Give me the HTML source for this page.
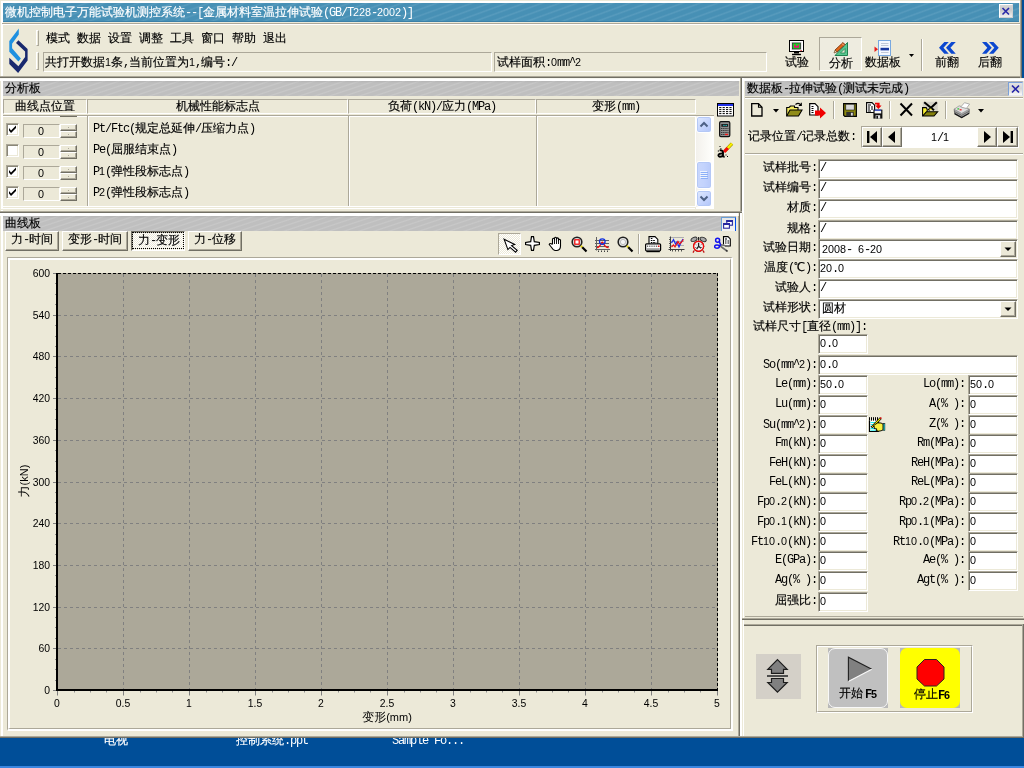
<!DOCTYPE html>
<html lang="zh"><head><meta charset="utf-8"><title>微机控制电子万能试验机测控系统</title><style>
html,body{margin:0;padding:0}
body{width:1024px;height:768px;overflow:hidden;background:#004e98;position:relative;font-family:"Liberation Mono","WenQuanYi Zen Hei",sans-serif;font-size:12px;line-height:12px;color:#000}
div,svg{position:absolute;box-sizing:border-box}
.t{white-space:nowrap;height:12px;-webkit-text-stroke:0.16px currentColor}
.l,.d{-webkit-text-stroke:0}
body>div,body>svg{will-change:transform}
.t span{position:static}
.l{font-family:"Liberation Mono",monospace;font-size:12px;letter-spacing:-1.2px}
.d{font-family:"Liberation Sans",sans-serif;font-size:10.8px}
.ax{font-family:"Liberation Sans",sans-serif;font-size:10.4px;fill:#000}
.axt{font-size:11px}
.axc{font-family:"Liberation Sans","WenQuanYi Zen Hei",sans-serif;font-size:12px}
.a{font-family:"Liberation Sans",sans-serif;font-size:11px;white-space:nowrap;height:12px;line-height:12px}
.stripe{background:linear-gradient(rgba(0,0,0,.06),rgba(0,0,0,0) 2px),repeating-linear-gradient(161.6deg,#bfbfbf 0,#bfbfbf 2.4px,#c8c8c8 3.6px,#bfbfbf 4.74px)}
.sunk{border:1px solid;border-color:#aca899 #fff #fff #aca899;}
.field{background:#fff;border:1px solid;border-color:#716f64 #fff #fff #716f64;box-shadow:inset 1px 1px 0 #aca899}
.btn{background:#ece9d8;border:1px solid;border-color:#fff #716f64 #716f64 #fff;box-shadow:inset -1px -1px 0 #aca899}
</style></head><body>
<div style="left:0px;top:0px;width:1022px;height:738px;background:#ece9d8"></div>
<div style="left:1px;top:1px;width:1019px;height:2px;background:#fff"></div>
<div style="left:1px;top:1px;width:2px;height:735px;background:#fff"></div>
<div style="left:1020px;top:0px;width:1px;height:738px;background:#aca899"></div>
<div style="left:1021px;top:0px;width:1px;height:738px;background:#716f64"></div>
<div style="left:0px;top:766px;width:1024px;height:2px;background:#3a86e0"></div>
<div class="t" style="left:104px;top:735px;color:#fff;clip-path:inset(3px 0 0 0)">电视</div>
<div class="t" style="left:236px;top:735px;color:#fff;clip-path:inset(3px 0 0 0)">控制系统<span class="l">.ppt</span></div>
<div class="t" style="left:392px;top:735px;color:#fff;clip-path:inset(3px 0 0 0)"><span class="l">Sample&nbsp;Fo...</span></div>
<div style="left:3px;top:3px;width:1016px;height:19px;background:repeating-linear-gradient(160deg,#4790b5 0,#4790b5 3px,#589bbd 4.5px,#4790b5 6px)"></div>
<div style="left:3px;top:21px;width:1016px;height:1px;background:#3b80a8"></div>
<div class="t" style="left:5px;top:6px;color:#fff">微机控制电子万能试验机测控系统<span class="l">--[</span>金属材料室温拉伸试验<span class="l">(GB/T</span><span class="d">228</span><span class="l">-</span><span class="d">2002</span><span class="l">)]</span></div>
<div style="left:999px;top:4px;width:14px;height:14px;background:linear-gradient(#d8d8d8,#c8c8c8 40%,#f0f0f0);border:1px solid;border-color:#fff #d0d0d0 #d0d0d0 #fff"></div>
<svg style="left:999px;top:4px" width="14" height="14" viewBox="0 0 14 14"><path d="M3.5 4 L10 10.5 M10 4 L3.5 10.5" stroke="#2828a8" stroke-width="1.6" fill="none"/></svg>
<div style="left:2px;top:23px;width:1018px;height:1px;background:#aca899"></div>
<div style="left:2px;top:24px;width:1018px;height:1px;background:#ffffff"></div>
<svg style="left:4px;top:24px" width="40" height="54" viewBox="0 0 40 54"><polygon points="14.8,4.6 5.3,16.9 5.3,27.8 14.4,37.6 16.9,34.5 8.1,24.3 8.1,19.7 14.8,10.5" fill="#1e90e0"/><polygon points="14.4,16.2 23.6,25 23.6,36.6 14.1,48.9 5.3,40.1 5.3,33.8 14.4,42.2 21.1,33 21.1,27.4 12,19" fill="#18286e"/></svg>
<div style="left:36px;top:30px;width:3px;height:16px;border:1px solid;border-color:#fff #aca899 #aca899 #fff;background:#ece9d8"></div>
<div style="left:36px;top:52px;width:3px;height:18px;border:1px solid;border-color:#fff #aca899 #aca899 #fff;background:#ece9d8"></div>
<div class="t" style="left:46px;top:33px;">模式</div>
<div class="t" style="left:77px;top:33px;">数据</div>
<div class="t" style="left:108px;top:33px;">设置</div>
<div class="t" style="left:139px;top:33px;">调整</div>
<div class="t" style="left:170px;top:33px;">工具</div>
<div class="t" style="left:201px;top:33px;">窗口</div>
<div class="t" style="left:232px;top:33px;">帮助</div>
<div class="t" style="left:263px;top:33px;">退出</div>
<div class="sunk" style="left:43px;top:52px;width:449px;height:20px;"></div>
<div class="t" style="left:45px;top:56px;">共打开数据<span class="d">1</span>条<span class="l">,</span>当前位置为<span class="d">1</span><span class="l">,</span>编号<span class="l">:/</span></div>
<div class="sunk" style="left:494px;top:52px;width:273px;height:20px;"></div>
<div class="t" style="left:497px;top:56px;">试样面积<span class="l">:</span><span class="d">0</span><span class="l">mm^</span><span class="d">2</span></div>
<div class="t" style="left:785px;top:57px;">试验</div>
<svg style="left:789px;top:40px" width="15" height="16" viewBox="0 0 15 16"><rect x="0.5" y="0.5" width="14" height="11" fill="#e8e8e8" stroke="#000"/><rect x="1.5" y="1.5" width="12" height="9" fill="none" stroke="#fff"/><rect x="3.5" y="3" width="8" height="6" fill="#10e020" stroke="#303030" stroke-width="0.8"/><path d="M5 4.5h1.6v1.5h2v-1.5h1.6v3.3h-5.2z" fill="#e81070"/><rect x="11.5" y="10" width="1.2" height="1.2" fill="#e02020"/><rect x="5" y="12" width="5" height="1.5" fill="#000"/><path d="M3 14.5h9" stroke="#000" stroke-width="1.4"/></svg>
<div style="left:819px;top:37px;width:43px;height:34px;border:1px solid;border-color:#aca899 #fff #fff #aca899;background:#eeece0"></div>
<div class="t" style="left:829px;top:58px;">分析</div>
<svg style="left:833px;top:41px" width="16" height="16" viewBox="0 0 16 16"><polygon points="14.5,1.5 14.5,14.5 2,14.5" fill="#58c890" stroke="#208050"/><polygon points="12,7.5 12,12 7.5,12" fill="#ece9d8" stroke="#208050" stroke-width="0.8"/><path d="M2 9 L10 1.5 L12 3.5 L4 11 Z" fill="#e06818" stroke="#702808" stroke-width="0.8"/><path d="M2 9 L1 12 L4 11Z" fill="#f0d0a0" stroke="#604020" stroke-width="0.6"/><path d="M9 2.5 L11 4.5" stroke="#f8b0a0" stroke-width="1"/></svg>
<div class="t" style="left:865px;top:57px;">数据板</div>
<svg style="left:874px;top:39px" width="18" height="18" viewBox="0 0 18 18"><rect x="4.5" y="1.5" width="12" height="15" fill="#f4f8ff" stroke="#78a8e0"/><path d="M7 4.5H14.5M7 6.5H14.5M7 13.5H14.5" stroke="#c0c8d8"/><rect x="6.5" y="8.8" width="8.5" height="2.6" fill="#1838a0"/><polygon points="0.5,7.5 0.5,13 4,10.2" fill="#e81818"/></svg>
<svg style="left:909px;top:54px" width="5" height="3" viewBox="0 0 5 3"><polygon points="0,0 5,0 2.5,3" fill="#000"/></svg>
<div style="left:921px;top:39px;width:1px;height:32px;background:#aca899"></div>
<div style="left:922px;top:39px;width:1px;height:32px;background:#ffffff"></div>
<div class="t" style="left:935px;top:57px;">前翻</div>
<div class="t" style="left:978px;top:57px;">后翻</div>
<svg style="left:938.6px;top:42px" width="18" height="12" viewBox="0 0 18 12"><polygon points="9.75,0.00 5.35,0.00 0.00,5.85 5.35,11.70 9.75,11.70 4.45,5.85" fill="#0c48d0"/><polygon points="16.75,0.00 12.35,0.00 7.00,5.85 12.35,11.70 16.75,11.70 11.45,5.85" fill="#0c48d0"/></svg>
<svg style="left:982px;top:42px" width="18" height="12" viewBox="0 0 18 12"><polygon points="0.00,0.00 4.40,0.00 9.75,5.85 4.40,11.70 0.00,11.70 5.30,5.85" fill="#0c48d0"/><polygon points="7.00,0.00 11.40,0.00 16.75,5.85 11.40,11.70 7.00,11.70 12.30,5.85" fill="#0c48d0"/></svg>
<div style="left:0px;top:76px;width:1020px;height:1px;background:#aca899"></div>
<div style="left:0px;top:77px;width:1020px;height:1px;background:#716f64"></div>
<div style="left:0px;top:78px;width:1020px;height:1px;background:#f8f7f0"></div>
<div style="left:0px;top:79px;width:1020px;height:1px;background:#ffffff"></div>
<div style="left:0px;top:80px;width:1020px;height:1px;background:#ffffff"></div>
<div class="stripe" style="left:3px;top:81px;width:736px;height:15px;"></div>
<div class="t" style="left:5px;top:83px;">分析板</div>
<div style="left:3px;top:99px;width:84px;height:15px;border:1px solid;border-color:#aca899 #fff #fff #aca899"></div>
<div class="t" style="left:-55px;top:101px;width:200px;text-align:center;">曲线点位置</div>
<div style="left:87px;top:99px;width:261px;height:15px;border:1px solid;border-color:#aca899 #fff #fff #aca899"></div>
<div class="t" style="left:117.5px;top:101px;width:200px;text-align:center;">机械性能标志点</div>
<div style="left:348px;top:99px;width:188px;height:15px;border:1px solid;border-color:#aca899 #fff #fff #aca899"></div>
<div class="t" style="left:342px;top:101px;width:200px;text-align:center;">负荷<span class="l">(kN)/</span>应力<span class="l">(MPa)</span></div>
<div style="left:536px;top:99px;width:160px;height:15px;border:1px solid;border-color:#aca899 #fff #fff #aca899"></div>
<div class="t" style="left:516px;top:101px;width:200px;text-align:center;">变形<span class="l">(mm)</span></div>
<div style="left:3px;top:115px;width:711px;height:1px;background:#aca899"></div>
<div style="left:3px;top:116px;width:693px;height:1px;background:#ffffff"></div>
<div style="left:87px;top:115px;width:1px;height:91px;background:#aca899"></div>
<div style="left:88px;top:117px;width:1px;height:89px;background:#ffffff"></div>
<div style="left:348px;top:115px;width:1px;height:91px;background:#aca899"></div>
<div style="left:349px;top:117px;width:1px;height:89px;background:#ffffff"></div>
<div style="left:536px;top:115px;width:1px;height:91px;background:#aca899"></div>
<div style="left:537px;top:117px;width:1px;height:89px;background:#ffffff"></div>
<div style="left:3px;top:206px;width:692px;height:1px;background:#ffffff"></div>
<div style="left:3px;top:208px;width:692px;height:1px;background:#ffffff"></div>
<div style="left:6px;top:123px;width:13px;height:13px;background:#fff;border:1px solid;border-color:#aca899 #fff #fff #aca899;box-shadow:inset 1px 1px 0 #8a8778, inset -1px -1px 0 #ece9d8"></div>
<svg style="left:6px;top:123px" width="13" height="13" viewBox="0 0 13 13"><path d="M3 5 L5 7.5 L10 2.5 L10 5 L5 10 L3 7.5Z" fill="#000"/></svg>
<div style="left:23px;top:124px;width:37px;height:14px;border:1px solid;border-color:#aca899 #fff #fff #aca899"></div>
<div class="t" style="left:-59px;top:125px;width:200px;text-align:center;"><span class="d">0</span></div>
<div class="btn" style="left:60px;top:124px;width:17px;height:7px;"></div>
<div class="btn" style="left:60px;top:131px;width:17px;height:7px;"></div>
<div style="left:68px;top:127px;width:1px;height:1px;background:#aca899"></div>
<div style="left:68px;top:134px;width:1px;height:1px;background:#aca899"></div>
<div class="t" style="left:93px;top:123px;"><span class="l">Pt/Ftc(</span>规定总延伸<span class="l">/</span>压缩力点<span class="l">)</span></div>
<div style="left:6px;top:144px;width:13px;height:13px;background:#fff;border:1px solid;border-color:#aca899 #fff #fff #aca899;box-shadow:inset 1px 1px 0 #8a8778, inset -1px -1px 0 #ece9d8"></div>
<div style="left:23px;top:145px;width:37px;height:14px;border:1px solid;border-color:#aca899 #fff #fff #aca899"></div>
<div class="t" style="left:-59px;top:146px;width:200px;text-align:center;"><span class="d">0</span></div>
<div class="btn" style="left:60px;top:145px;width:17px;height:7px;"></div>
<div class="btn" style="left:60px;top:152px;width:17px;height:7px;"></div>
<div style="left:68px;top:148px;width:1px;height:1px;background:#aca899"></div>
<div style="left:68px;top:155px;width:1px;height:1px;background:#aca899"></div>
<div class="t" style="left:93px;top:144px;"><span class="l">Pe(</span>屈服结束点<span class="l">)</span></div>
<div style="left:6px;top:165px;width:13px;height:13px;background:#fff;border:1px solid;border-color:#aca899 #fff #fff #aca899;box-shadow:inset 1px 1px 0 #8a8778, inset -1px -1px 0 #ece9d8"></div>
<svg style="left:6px;top:165px" width="13" height="13" viewBox="0 0 13 13"><path d="M3 5 L5 7.5 L10 2.5 L10 5 L5 10 L3 7.5Z" fill="#000"/></svg>
<div style="left:23px;top:166px;width:37px;height:14px;border:1px solid;border-color:#aca899 #fff #fff #aca899"></div>
<div class="t" style="left:-59px;top:167px;width:200px;text-align:center;"><span class="d">0</span></div>
<div class="btn" style="left:60px;top:166px;width:17px;height:7px;"></div>
<div class="btn" style="left:60px;top:173px;width:17px;height:7px;"></div>
<div style="left:68px;top:169px;width:1px;height:1px;background:#aca899"></div>
<div style="left:68px;top:176px;width:1px;height:1px;background:#aca899"></div>
<div class="t" style="left:93px;top:165px;"><span class="l">P</span><span class="d">1</span><span class="l">(</span>弹性段标志点<span class="l">)</span></div>
<div style="left:6px;top:186px;width:13px;height:13px;background:#fff;border:1px solid;border-color:#aca899 #fff #fff #aca899;box-shadow:inset 1px 1px 0 #8a8778, inset -1px -1px 0 #ece9d8"></div>
<svg style="left:6px;top:186px" width="13" height="13" viewBox="0 0 13 13"><path d="M3 5 L5 7.5 L10 2.5 L10 5 L5 10 L3 7.5Z" fill="#000"/></svg>
<div style="left:23px;top:187px;width:37px;height:14px;border:1px solid;border-color:#aca899 #fff #fff #aca899"></div>
<div class="t" style="left:-59px;top:188px;width:200px;text-align:center;"><span class="d">0</span></div>
<div class="btn" style="left:60px;top:187px;width:17px;height:7px;"></div>
<div class="btn" style="left:60px;top:194px;width:17px;height:7px;"></div>
<div style="left:68px;top:190px;width:1px;height:1px;background:#aca899"></div>
<div style="left:68px;top:197px;width:1px;height:1px;background:#aca899"></div>
<div class="t" style="left:93px;top:186px;"><span class="l">P</span><span class="d">2</span><span class="l">(</span>弹性段标志点<span class="l">)</span></div>
<div style="left:60px;top:116px;width:17px;height:1px;background:#716f64"></div>
<div style="left:696px;top:116px;width:18px;height:93px;background:#fff"></div>
<div style="left:696px;top:116px;width:16px;height:91px;background:linear-gradient(90deg,#f3f1ec,#fefefb)"></div>
<div style="left:695px;top:117px;width:1px;height:90px;background:#ffffff"></div>
<div style="left:696px;top:116px;width:16px;height:17px;background:linear-gradient(135deg,#e1eafe,#c3d3fd 60%,#b0c4f8);border:1px solid #fff;border-radius:3px;box-shadow:inset 0 0 0 1px #b4c8f6"></div>
<svg style="left:696px;top:116px" width="16" height="17" viewBox="0 0 16 17"><path d="M4.5 10.5 L8 7 L11.5 10.5" stroke="#4d6185" stroke-width="2" fill="none"/></svg>
<div style="left:696px;top:190px;width:16px;height:17px;background:linear-gradient(135deg,#e1eafe,#c3d3fd 60%,#b0c4f8);border:1px solid #fff;border-radius:3px;box-shadow:inset 0 0 0 1px #b4c8f6"></div>
<svg style="left:696px;top:190px" width="16" height="17" viewBox="0 0 16 17"><path d="M4.5 6.5 L8 10 L11.5 6.5" stroke="#4d6185" stroke-width="2" fill="none"/></svg>
<div style="left:696px;top:161px;width:16px;height:28px;background:linear-gradient(90deg,#c9d7fc,#c3d3fd 50%,#b8cafa);border:1px solid #fff;border-radius:3px;box-shadow:inset 0 0 0 1px #b4c8f6"></div>
<div style="left:700px;top:171px;width:7px;height:1px;background:#eef4fe"></div>
<div style="left:701px;top:172px;width:7px;height:1px;background:#8cb0f8"></div>
<div style="left:700px;top:173px;width:7px;height:1px;background:#eef4fe"></div>
<div style="left:701px;top:174px;width:7px;height:1px;background:#8cb0f8"></div>
<div style="left:700px;top:175px;width:7px;height:1px;background:#eef4fe"></div>
<div style="left:701px;top:176px;width:7px;height:1px;background:#8cb0f8"></div>
<div style="left:700px;top:177px;width:7px;height:1px;background:#eef4fe"></div>
<div style="left:701px;top:178px;width:7px;height:1px;background:#8cb0f8"></div>
<svg style="left:717px;top:102px" width="17" height="15" viewBox="0 0 17 15"><rect x="0.5" y="1.5" width="16" height="12.5" fill="#fff" stroke="#000"/><rect x="1" y="2" width="15" height="2" fill="#2030e8"/><path d="M2.2 5.6H15M2.2 7.6H15M2.2 9.6H15M2.2 11.6H15" stroke="#000" stroke-width="1" stroke-dasharray="2.2 1.2"/></svg>
<svg style="left:719px;top:121px" width="12" height="17" viewBox="0 0 12 17"><rect x="0.6" y="0.6" width="10.2" height="15" rx="1.3" fill="#909090" stroke="#101010" stroke-width="1.2"/><rect x="2.3" y="3" width="6.8" height="2.8" fill="#202020"/><rect x="4.4" y="3.9" width="1.1" height="1.1" fill="#20e0e8"/><rect x="6.6" y="3.9" width="1.1" height="1.1" fill="#20e0e8"/><path d="M2.3 7.5H9.3M2.3 9.5H9.3M2.3 11.5H9.3M2.3 13.5H5.5" stroke="#101010" stroke-width="1" stroke-dasharray="1 1.1"/><rect x="6" y="12.8" width="3.1" height="1.3" fill="#f01818"/></svg>
<svg style="left:716px;top:141px" width="18" height="18" viewBox="0 0 18 18"><path d="M8.6 10.4 L16 2.6" stroke="#a09000" stroke-width="3.4"/><path d="M8.6 10.4 L16 2.6" stroke="#f8f000" stroke-width="2.2"/><path d="M8 11 L11.8 7" stroke="#f00810" stroke-width="3.2"/><path d="M3.6 9.4 q3 -0.6 3.4 1.8 v3.6 q0.4 1.2 1.6 0.6 M7 12.6 q-4.6 -0.4 -4.6 2 q0.4 2 4.6 0.4" fill="none" stroke="#000" stroke-width="1.9"/><path d="M3.5 5.5h1M4.4 7.6h1M1.8 10h1.2M4.8 9.6h1M9.5 14h1M11 15.5h1" stroke="#000" stroke-width="1"/></svg>
<div style="left:0px;top:209px;width:738px;height:1px;background:#ece9d8"></div>
<div style="left:0px;top:211px;width:738px;height:1px;background:#aca899"></div>
<div style="left:0px;top:212px;width:738px;height:1px;background:#716f64"></div>
<div style="left:0px;top:213px;width:738px;height:1px;background:#ffffff"></div>
<div style="left:0px;top:214px;width:738px;height:1px;background:#ffffff"></div>
<div style="left:0px;top:215px;width:738px;height:1px;background:#ffffff"></div>
<div class="stripe" style="left:3px;top:216px;width:733px;height:15px;"></div>
<div class="t" style="left:5px;top:218px;">曲线板</div>
<div style="left:721px;top:217px;width:15px;height:14px;background:linear-gradient(#e6e6e6,#f4f4f4);border-style:solid;border-width:1px 1px 0 1px;border-color:#6a9fd8 #0050ee #fff #6a9fd8"></div>
<svg style="left:721px;top:217px" width="15" height="14" viewBox="0 0 15 14"><rect x="5.8" y="3.6" width="5.6" height="4.6" fill="#fff" stroke="#2828a0" stroke-width="1.1"/><rect x="2.6" y="6.6" width="5.8" height="4.6" fill="#fff" stroke="#2828a0" stroke-width="1.1"/><path d="M5.3 4H12M2.1 7H9" stroke="#2828a0" stroke-width="1.8"/></svg>
<div class="btn" style="left:5px;top:231px;width:54px;height:20px;"></div>
<div class="t" style="left:11px;top:234px;">力<span class="l">-</span>时间</div>
<div class="btn" style="left:62px;top:231px;width:66px;height:20px;"></div>
<div class="t" style="left:68px;top:234px;">变形<span class="l">-</span>时间</div>
<div style="left:131px;top:231px;width:54px;height:20px;background:repeating-conic-gradient(#fff 0 25%,#ece9d8 0 50%) 0 0/2px 2px;border:1px solid;border-color:#716f64 #fff #fff #716f64;box-shadow:inset 1px 1px 0 #aca899"></div>
<div style="left:132px;top:232px;width:52px;height:17px;border:1px dotted #000"></div>
<div class="t" style="left:138px;top:235px;">力<span class="l">-</span>变形</div>
<div class="btn" style="left:188px;top:231px;width:54px;height:20px;"></div>
<div class="t" style="left:194px;top:234px;">力<span class="l">-</span>位移</div>
<div style="left:498px;top:233px;width:23px;height:22px;background:repeating-conic-gradient(#fff 0 25%,#ece9d8 0 50%) 0 0/2px 2px;border:1px solid;border-color:#aca899 #fff #fff #aca899"></div>
<svg style="left:503px;top:238px" width="16" height="16" viewBox="0 0 16 16"><polygon points="1.1,1.2 11.7,6.4 8.6,7.6 14.2,12.4 12.6,14.2 7,9.4 4.9,11.6" fill="#fff" stroke="#000" stroke-width="1.1" stroke-linejoin="miter"/></svg>
<svg style="left:525px;top:236px" width="16" height="16" viewBox="0 0 16 16"><path d="M6.5 0.6 H8.5 L9.3 5.7 L14.4 6.5 V8.5 L9.3 9.3 L8.5 14.4 H6.5 L5.7 9.3 L0.6 8.5 V6.5 L5.7 5.7Z" fill="#fff" stroke="#000" stroke-width="1.2"/></svg>
<svg style="left:548px;top:236px" width="16" height="16" viewBox="0 0 16 16"><path d="M4.5 8 V3 q1 -1.4 2 0 V2 q1 -1.4 2 0 V2.6 q1 -1.4 2 0 V4 q1 -1.2 2 0 V10 q0 4 -3.5 4.5 H7 q-2 -0.5 -3 -2.5 L1.2 8.5 q0.6 -1.6 2 -0.6Z" fill="#fff" stroke="#000" stroke-width="1.1"/><path d="M6.5 3V8M8.5 2.5V8M10.5 3V8" stroke="#000" stroke-width="0.9"/></svg>
<svg style="left:571px;top:236px" width="17" height="17" viewBox="0 0 17 17"><circle cx="6" cy="6" r="4.8" fill="#e0e0e0" stroke="#202020" stroke-width="1.6"/><rect x="3.8" y="3.8" width="4.4" height="4.4" fill="#fff" stroke="#f00000" stroke-width="1.2"/><path d="M9.8 9.8 L11.5 11.5" stroke="#e0d020" stroke-width="2"/><path d="M11.3 11.3 L15.5 15.5" stroke="#000" stroke-width="2.2"/></svg>
<svg style="left:594px;top:236px" width="17" height="17" viewBox="0 0 17 17"><path d="M2.5 1V14.5 M1 13.5H16 M1 4.5H15M1 7.5H15M1 10.5H15" stroke="#606060" stroke-width="1"/><path d="M4.5 14.5V16M7.5 14.5V16M10.5 14.5V16M13.5 14.5V16" stroke="#404040"/><path d="M3 11.5 q2.5 0 4 -4 q1.3 -2.5 2.6 0 q1.5 4 5 4" stroke="#f01010" stroke-width="1.3" fill="none"/><circle cx="8.3" cy="5.6" r="2.8" fill="none" stroke="#1030e0" stroke-width="1.3"/></svg>
<svg style="left:617px;top:236px" width="17" height="17" viewBox="0 0 17 17"><circle cx="6" cy="6" r="4.8" fill="#e4e4e4" stroke="#202020" stroke-width="1.6"/><circle cx="6" cy="6" r="2.6" fill="#f4f4f4" stroke="#b0b0b0" stroke-width="0.8"/><path d="M9.8 9.8 L11.5 11.5" stroke="#e0d020" stroke-width="2"/><path d="M11.3 11.3 L15.5 15.5" stroke="#000" stroke-width="2.2"/></svg>
<div style="left:638px;top:234px;width:1px;height:20px;background:#aca899"></div>
<div style="left:639px;top:234px;width:1px;height:20px;background:#ffffff"></div>
<svg style="left:644px;top:236px" width="18" height="17" viewBox="0 0 18 17"><path d="M5 8 V0.6 H11 L13.8 3.4 V8" fill="#fff" stroke="#000" stroke-width="1.1"/><path d="M6.8 2.5h2.2M6.8 4.5h4.5M6.8 6.5h5.5" stroke="#000" stroke-width="1.1" stroke-dasharray="1.6 0.8"/><rect x="1.6" y="7.8" width="15" height="7" rx="1" fill="#fff" stroke="#000" stroke-width="1.2"/><path d="M3 10.3H14" stroke="#707070" stroke-width="1.4" stroke-dasharray="1 0.8"/><rect x="14" y="9.5" width="1.5" height="1.5" fill="#e01010"/><rect x="2.4" y="12.2" width="13.4" height="2" fill="#a0a0a0"/><path d="M2.5 15.6H15.8" stroke="#000" stroke-width="1.2"/></svg>
<svg style="left:668px;top:236px" width="17" height="17" viewBox="0 0 17 17"><path d="M1 1.5H16M1 5.5H16M1 9.5H16" stroke="#b0b0b0" stroke-width="1"/><path d="M2.5 0.5V15 M0.5 13.5H16.5" stroke="#404040" stroke-width="1"/><path d="M4.5 14V15.5M7.5 14V15.5M10.5 14V15.5M13.5 14V15.5M1 3.5h1.5M1 7.5h1.5M1 11.5h1.5" stroke="#404040" stroke-width="0.9"/><path d="M3.5 7 L5.5 3.5 L7.5 8 L9 6 L11 11 L13 6.5 L15 3" stroke="#1428f0" stroke-width="1.2" fill="none"/><path d="M3.5 11 L5.5 9 L7 11 L10 5.5 L11.5 8 L13.5 6 L15.5 3.5" stroke="#f01414" stroke-width="1.2" fill="none"/></svg>
<svg style="left:690px;top:236px" width="17" height="17" viewBox="0 0 17 17"><ellipse cx="4" cy="3.4" rx="3.2" ry="2" transform="rotate(-25 4 3.4)" fill="#a8a8a8" stroke="#303030" stroke-width="0.9"/><ellipse cx="13.2" cy="3.4" rx="3.2" ry="2" transform="rotate(25 13.2 3.4)" fill="#a8a8a8" stroke="#303030" stroke-width="0.9"/><path d="M8.6 1V4.5" stroke="#202020" stroke-width="1.2"/><path d="M4.2 14.5L3 16.6M13 14.5L14.2 16.6" stroke="#c01010" stroke-width="1.3"/><circle cx="8.6" cy="10.3" r="5.6" fill="#303030"/><circle cx="8.6" cy="10.3" r="5" fill="#f4f4f4" stroke="#f00808" stroke-width="1.4"/><path d="M8.6 6.8V10.3L11 12.3M8.6 10.3L6.6 13" stroke="#202020" stroke-width="1.3" fill="none"/><path d="M5.5 8.2l1 .8M11.7 8.2l-1 .8M5.2 11.5h1M11 11.5h1" stroke="#606060" stroke-width="0.9"/></svg>
<svg style="left:714px;top:236px" width="17" height="17" viewBox="0 0 17 17"><path d="M9.5 8.5 V0.6 H14 L16.3 2.9 V10 H11" fill="#fff" stroke="#000" stroke-width="1.1"/><path d="M11 3h2M11 5h1.5M13.5 5h1.5M11 7h1.5M13.5 7h1.5" stroke="#000" stroke-width="1.1"/><path d="M6 8.5 L15 10.5 M5.5 9.5 L13 15" stroke="#707070" stroke-width="1.6"/><path d="M12 14.4 L13.6 15.4" stroke="#303030" stroke-width="1.6"/><circle cx="3.6" cy="4.2" r="2" fill="none" stroke="#1010f0" stroke-width="1.5"/><path d="M5.2 5.4 L6.6 8.8" stroke="#1010f0" stroke-width="1.5"/><ellipse cx="3" cy="10.6" rx="2.4" ry="1.7" fill="none" stroke="#1010f0" stroke-width="1.5"/><path d="M5 9.8 L7 8.8" stroke="#1010f0" stroke-width="1.5"/></svg>
<div style="left:7px;top:257px;width:726px;height:474px;border-style:solid;border-width:1px 2px 2px 1px;border-color:#aca899 #fff #fff #aca899"></div>
<div style="left:8px;top:258px;width:723px;height:471px;border-style:solid;border-width:2px 1px 1px 2px;border-color:#fff #aca899 #aca899 #fff"></div>
<svg style="left:0;top:0" width="740" height="737" viewBox="0 0 740 737"><rect x="57" y="273" width="661" height="417" fill="#aca899"/><path d="M58 648.5H717" stroke="#808080" stroke-dasharray="3 3" stroke-width="1"/><path d="M58 607.5H717" stroke="#808080" stroke-dasharray="3 3" stroke-width="1"/><path d="M58 565.5H717" stroke="#808080" stroke-dasharray="3 3" stroke-width="1"/><path d="M58 523.5H717" stroke="#808080" stroke-dasharray="3 3" stroke-width="1"/><path d="M58 482.5H717" stroke="#808080" stroke-dasharray="3 3" stroke-width="1"/><path d="M58 440.5H717" stroke="#808080" stroke-dasharray="3 3" stroke-width="1"/><path d="M58 398.5H717" stroke="#808080" stroke-dasharray="3 3" stroke-width="1"/><path d="M58 356.5H717" stroke="#808080" stroke-dasharray="3 3" stroke-width="1"/><path d="M58 315.5H717" stroke="#808080" stroke-dasharray="3 3" stroke-width="1"/><path d="M123.5 274V689" stroke="#808080" stroke-dasharray="3 3" stroke-width="1"/><path d="M189.5 274V689" stroke="#808080" stroke-dasharray="3 3" stroke-width="1"/><path d="M255.5 274V689" stroke="#808080" stroke-dasharray="3 3" stroke-width="1"/><path d="M321.5 274V689" stroke="#808080" stroke-dasharray="3 3" stroke-width="1"/><path d="M387.5 274V689" stroke="#808080" stroke-dasharray="3 3" stroke-width="1"/><path d="M453.5 274V689" stroke="#808080" stroke-dasharray="3 3" stroke-width="1"/><path d="M519.5 274V689" stroke="#808080" stroke-dasharray="3 3" stroke-width="1"/><path d="M585.5 274V689" stroke="#808080" stroke-dasharray="3 3" stroke-width="1"/><path d="M651.5 274V689" stroke="#808080" stroke-dasharray="3 3" stroke-width="1"/><path d="M58 273.5H718" stroke="#000" stroke-dasharray="3 2"/><path d="M717.5 273V690" stroke="#000" stroke-dasharray="3 2"/><path d="M57 273V691" stroke="#000" stroke-width="2"/><path d="M56 690H718" stroke="#000" stroke-width="2"/><path d="M53 690.5H56" stroke="#808080"/><path d="M55 680.5H56" stroke="#909090"/><path d="M55 669.5H56" stroke="#909090"/><path d="M55 659.5H56" stroke="#909090"/><path d="M53 648.5H56" stroke="#808080"/><path d="M55 638.5H56" stroke="#909090"/><path d="M55 627.5H56" stroke="#909090"/><path d="M55 617.5H56" stroke="#909090"/><path d="M53 607.5H56" stroke="#808080"/><path d="M55 596.5H56" stroke="#909090"/><path d="M55 586.5H56" stroke="#909090"/><path d="M55 575.5H56" stroke="#909090"/><path d="M53 565.5H56" stroke="#808080"/><path d="M55 554.5H56" stroke="#909090"/><path d="M55 544.5H56" stroke="#909090"/><path d="M55 534.5H56" stroke="#909090"/><path d="M53 523.5H56" stroke="#808080"/><path d="M55 513.5H56" stroke="#909090"/><path d="M55 502.5H56" stroke="#909090"/><path d="M55 492.5H56" stroke="#909090"/><path d="M53 482.5H56" stroke="#808080"/><path d="M55 471.5H56" stroke="#909090"/><path d="M55 461.5H56" stroke="#909090"/><path d="M55 450.5H56" stroke="#909090"/><path d="M53 440.5H56" stroke="#808080"/><path d="M55 429.5H56" stroke="#909090"/><path d="M55 419.5H56" stroke="#909090"/><path d="M55 409.5H56" stroke="#909090"/><path d="M53 398.5H56" stroke="#808080"/><path d="M55 388.5H56" stroke="#909090"/><path d="M55 377.5H56" stroke="#909090"/><path d="M55 367.5H56" stroke="#909090"/><path d="M53 356.5H56" stroke="#808080"/><path d="M55 346.5H56" stroke="#909090"/><path d="M55 336.5H56" stroke="#909090"/><path d="M55 325.5H56" stroke="#909090"/><path d="M53 315.5H56" stroke="#808080"/><path d="M55 304.5H56" stroke="#909090"/><path d="M55 294.5H56" stroke="#909090"/><path d="M55 283.5H56" stroke="#909090"/><path d="M53 273.5H56" stroke="#808080"/><path d="M57.5 691V695.5" stroke="#808080"/><path d="M74.5 691V692.5" stroke="#909090"/><path d="M90.5 691V692.5" stroke="#909090"/><path d="M106.5 691V692.5" stroke="#909090"/><path d="M123.5 691V695.5" stroke="#808080"/><path d="M140.5 691V692.5" stroke="#909090"/><path d="M156.5 691V692.5" stroke="#909090"/><path d="M172.5 691V692.5" stroke="#909090"/><path d="M189.5 691V695.5" stroke="#808080"/><path d="M206.5 691V692.5" stroke="#909090"/><path d="M222.5 691V692.5" stroke="#909090"/><path d="M238.5 691V692.5" stroke="#909090"/><path d="M255.5 691V695.5" stroke="#808080"/><path d="M272.5 691V692.5" stroke="#909090"/><path d="M288.5 691V692.5" stroke="#909090"/><path d="M304.5 691V692.5" stroke="#909090"/><path d="M321.5 691V695.5" stroke="#808080"/><path d="M338.5 691V692.5" stroke="#909090"/><path d="M354.5 691V692.5" stroke="#909090"/><path d="M370.5 691V692.5" stroke="#909090"/><path d="M387.5 691V695.5" stroke="#808080"/><path d="M404.5 691V692.5" stroke="#909090"/><path d="M420.5 691V692.5" stroke="#909090"/><path d="M436.5 691V692.5" stroke="#909090"/><path d="M453.5 691V695.5" stroke="#808080"/><path d="M470.5 691V692.5" stroke="#909090"/><path d="M486.5 691V692.5" stroke="#909090"/><path d="M502.5 691V692.5" stroke="#909090"/><path d="M519.5 691V695.5" stroke="#808080"/><path d="M536.5 691V692.5" stroke="#909090"/><path d="M552.5 691V692.5" stroke="#909090"/><path d="M568.5 691V692.5" stroke="#909090"/><path d="M585.5 691V695.5" stroke="#808080"/><path d="M602.5 691V692.5" stroke="#909090"/><path d="M618.5 691V692.5" stroke="#909090"/><path d="M634.5 691V692.5" stroke="#909090"/><path d="M651.5 691V695.5" stroke="#808080"/><path d="M668.5 691V692.5" stroke="#909090"/><path d="M684.5 691V692.5" stroke="#909090"/><path d="M700.5 691V692.5" stroke="#909090"/><path d="M717.5 691V695.5" stroke="#808080"/><text x="50" y="694" text-anchor="end" class="ax">0</text><text x="50" y="652" text-anchor="end" class="ax">60</text><text x="50" y="611" text-anchor="end" class="ax">120</text><text x="50" y="569" text-anchor="end" class="ax">180</text><text x="50" y="527" text-anchor="end" class="ax">240</text><text x="50" y="486" text-anchor="end" class="ax">300</text><text x="50" y="444" text-anchor="end" class="ax">360</text><text x="50" y="402" text-anchor="end" class="ax">420</text><text x="50" y="360" text-anchor="end" class="ax">480</text><text x="50" y="319" text-anchor="end" class="ax">540</text><text x="50" y="277" text-anchor="end" class="ax">600</text><text x="57" y="707" text-anchor="middle" class="ax">0</text><text x="123" y="707" text-anchor="middle" class="ax">0.5</text><text x="189" y="707" text-anchor="middle" class="ax">1</text><text x="255" y="707" text-anchor="middle" class="ax">1.5</text><text x="321" y="707" text-anchor="middle" class="ax">2</text><text x="387" y="707" text-anchor="middle" class="ax">2.5</text><text x="453" y="707" text-anchor="middle" class="ax">3</text><text x="519" y="707" text-anchor="middle" class="ax">3.5</text><text x="585" y="707" text-anchor="middle" class="ax">4</text><text x="651" y="707" text-anchor="middle" class="ax">4.5</text><text x="717" y="707" text-anchor="middle" class="ax">5</text><text x="387" y="721" text-anchor="middle" class="ax axt"><tspan class="axc">变形</tspan>(mm)</text><text transform="translate(27.5,481) rotate(-90)" text-anchor="middle" class="ax axt"><tspan class="axc">力</tspan>(kN)</text></svg>
<div style="left:739px;top:78px;width:285px;height:660px;background:#ece9d8"></div>
<div style="left:0px;top:78px;width:1024px;height:1px;background:#f8f7f0"></div>
<div style="left:0px;top:79px;width:1024px;height:1px;background:#ffffff"></div>
<div style="left:0px;top:80px;width:1024px;height:1px;background:#ffffff"></div>
<div style="left:740px;top:78px;width:1px;height:135px;background:#aca899"></div>
<div style="left:741px;top:78px;width:1px;height:135px;background:#716f64"></div>
<div style="left:742px;top:78px;width:1px;height:135px;background:#ffffff"></div>
<div style="left:743px;top:78px;width:1px;height:546px;background:#ffffff"></div>
<div style="left:0px;top:211px;width:742px;height:1px;background:#aca899"></div>
<div style="left:0px;top:212px;width:742px;height:1px;background:#716f64"></div>
<div style="left:738px;top:216px;width:1px;height:520px;background:#aca899"></div>
<div style="left:739px;top:213px;width:1px;height:523px;background:#716f64"></div>
<div style="left:740px;top:213px;width:1px;height:523px;background:#ffffff"></div>
<div style="left:741px;top:213px;width:1px;height:523px;background:#ffffff"></div>
<div style="left:0px;top:736px;width:1024px;height:1px;background:#aca899"></div>
<div style="left:0px;top:737px;width:1024px;height:1px;background:#716f64"></div>
<div class="stripe" style="left:745px;top:81px;width:278px;height:15px;"></div>
<div class="t" style="left:747px;top:83px;">数据板<span class="l">-</span>拉伸试验<span class="l">(</span>测试未完成<span class="l">)</span></div>
<div style="left:1008px;top:82px;width:15px;height:14px;background:linear-gradient(#e4e4e4,#d4d4d4 45%,#fafafa);border:1px solid;border-color:#7aa0d8 #c8d4e8 #e8e8f0 #7aa0d8"></div>
<svg style="left:1008px;top:82px" width="15" height="14" viewBox="0 0 15 14"><path d="M4 3.5 L11 10.5 M11 3.5 L4 10.5" stroke="#2424a8" stroke-width="1.7" fill="none"/></svg>
<div style="left:745px;top:97px;width:278px;height:1px;background:#aca899"></div>
<div style="left:745px;top:98px;width:278px;height:1px;background:#ffffff"></div>
<svg style="left:751px;top:103px" width="12" height="14" viewBox="0 0 12 14"><path d="M0.7 0.7 H7.5 L11 4.2 V13 H0.7Z" fill="none" stroke="#000" stroke-width="1.3"/><path d="M7.5 0.7 V4.2 H11" fill="none" stroke="#000" stroke-width="1.1"/></svg>
<svg style="left:773px;top:109px" width="6" height="4" viewBox="0 0 6 4"><polygon points="0,0 6,0 3,3.5" fill="#000"/></svg>
<svg style="left:786px;top:102px" width="17" height="15" viewBox="0 0 17 15"><path d="M0.7 14 V5.5 H3 L4.5 4 H8.5 V5.5 H12 V8" fill="#f4ec60" stroke="#000" stroke-width="1.1"/><path d="M0.7 14 L4 8 H16 L12.5 14Z" fill="#908c18" stroke="#000" stroke-width="1.1"/><path d="M9.5 2.5 q3 -2.5 5.5 0.5 M15.3 0.8 V3.4 H12.8" fill="none" stroke="#000" stroke-width="1.1"/></svg>
<svg style="left:809px;top:103px" width="18" height="16" viewBox="0 0 18 16"><path d="M0.7 0.7 H6 L9 3.7 V12 H0.7Z" fill="#fff" stroke="#000" stroke-width="1.2"/><path d="M2.5 3.5h2M2.5 5.5h2M2.5 7.5h2M2.5 9.5h2" stroke="#000" stroke-width="1.1"/><polygon points="6,7.5 11,7.5 11,4.5 17,10 11,15.5 11,12.5 6,12.5" fill="#f00000"/></svg>
<div style="left:833px;top:101px;width:1px;height:18px;background:#aca899"></div>
<div style="left:834px;top:101px;width:1px;height:18px;background:#ffffff"></div>
<svg style="left:843px;top:103px" width="14" height="14" viewBox="0 0 15 15"><path d="M0.7 0.7 H14.3 V14.3 H2 L0.7 13Z" fill="#8c8810" stroke="#000" stroke-width="1.3"/><rect x="3" y="1.3" width="9" height="6.2" fill="#d8d8d8" stroke="#000" stroke-width="0.6"/><rect x="3.5" y="9.5" width="8" height="4.8" fill="#303030"/><rect x="8.5" y="10.5" width="2" height="3" fill="#d8d8d8"/></svg>
<svg style="left:866px;top:102px" width="17" height="17" viewBox="0 0 17 17"><path d="M0.6 0.6 H6 L8.6 3.2 V10.5 H0.6Z" fill="#fff" stroke="#000" stroke-width="1.1"/><path d="M2 3h3M2 5h2M5 5h2M2 7h2M5 7h2M2 9h3" stroke="#000" stroke-width="1"/><rect x="7.4" y="7.6" width="9" height="9" fill="#101010"/><rect x="8.6" y="7.6" width="6.6" height="1.2" fill="#2040e0"/><rect x="8.6" y="8.8" width="6.6" height="2.6" fill="#f4f4f4"/><rect x="9.6" y="13.2" width="4.6" height="3.4" fill="#e0e0e0"/><rect x="10.4" y="13.8" width="1.6" height="2.8" fill="#101010"/><polygon points="9,0.8 13.6,0.8 13.6,3.6 15.6,3.6 12.4,7 9.2,3.6 11.2,3.6 11.2,2.6 9,2.6" fill="#f00000"/></svg>
<div style="left:889px;top:101px;width:1px;height:18px;background:#aca899"></div>
<div style="left:890px;top:101px;width:1px;height:18px;background:#ffffff"></div>
<svg style="left:899px;top:102px" width="15" height="15" viewBox="0 0 15 15"><path d="M1.5 1.5 L13 13.5 M13 1.5 L1.5 13.5" stroke="#000" stroke-width="2" fill="none"/></svg>
<svg style="left:922px;top:101px" width="17" height="17" viewBox="0 0 17 17"><rect x="0.8" y="0.8" width="15" height="8.8" fill="#d4d2c6"/><path d="M0.6 15 V6.6 H4.2 L5.2 8.4 V10.8" fill="#f8f030" stroke="#000" stroke-width="1.1"/><path d="M0.6 15 L4.4 10.8 H15.6 L12 15Z" fill="#84800c" stroke="#000" stroke-width="1.1"/><path d="M2.2 1.2 L12 9.2 M14.8 1.2 L6.4 9.2" stroke="#000" stroke-width="2"/><rect x="7.4" y="7.6" width="2" height="1.6" fill="#f8f030"/></svg>
<div style="left:945px;top:101px;width:1px;height:18px;background:#aca899"></div>
<div style="left:946px;top:101px;width:1px;height:18px;background:#ffffff"></div>
<svg style="left:953px;top:101px" width="18" height="18" viewBox="0 0 18 18"><polygon points="1.2,8.2 1.6,12.6 8.7,16.6 16.2,12.2 16.2,8.2" fill="#a8a8a8" stroke="#505050" stroke-width="0.7"/><path d="M1.6 12.6 L8.7 16.6 L16.2 12.2" fill="none" stroke="#181818" stroke-width="1.3"/><path d="M1.4 10.6 L8.7 14.4 L16.2 10.2" fill="none" stroke="#606060" stroke-width="0.9"/><polygon points="1.2,8.2 6.2,4.8 16.2,8.2 8.7,12.4" fill="#e0e0e0" stroke="#808080" stroke-width="0.6"/><polygon points="7.7,6 11.5,1.7 16.6,3.1 13.4,7.4" fill="#fff" stroke="#909090" stroke-width="0.7"/><rect x="4.4" y="7.3" width="1.8" height="1.2" fill="#20c020"/><rect x="6.6" y="8.2" width="2" height="1.2" fill="#f01818"/></svg>
<svg style="left:978px;top:109px" width="6" height="4" viewBox="0 0 6 4"><polygon points="0,0 6,0 3,3.5" fill="#000"/></svg>
<div class="t" style="left:748px;top:131px;">记录位置<span class="l">/</span>记录总数<span class="l">:</span></div>
<div style="left:861px;top:126px;width:158px;height:22px;background:#fff;border:1px solid;border-color:#aca899 #fff #fff #aca899"></div>
<div class="btn" style="left:862px;top:127px;width:20px;height:20px;"></div>
<svg style="left:862px;top:127px" width="20" height="20" viewBox="0 0 20 20"><rect x="5" y="4" width="2.4" height="12" fill="#000"/><polygon points="15,4 15,16 8,10" fill="#000"/></svg>
<div class="btn" style="left:882px;top:127px;width:20px;height:20px;"></div>
<svg style="left:882px;top:127px" width="20" height="20" viewBox="0 0 20 20"><polygon points="13,4 13,16 6,10" fill="#000"/></svg>
<div class="btn" style="left:977px;top:127px;width:20px;height:20px;"></div>
<svg style="left:977px;top:127px" width="20" height="20" viewBox="0 0 20 20"><polygon points="7,4 7,16 14,10" fill="#000"/></svg>
<div class="btn" style="left:997px;top:127px;width:21px;height:20px;"></div>
<svg style="left:997px;top:127px" width="20" height="20" viewBox="0 0 20 20"><rect x="13.6" y="4" width="2.4" height="12" fill="#000"/><polygon points="6,4 6,16 13,10" fill="#000"/></svg>
<div class="t" style="left:839.5px;top:131px;width:200px;text-align:center;"><span class="d">1</span><span class="l">/</span><span class="d">1</span></div>
<div style="left:745px;top:153px;width:278px;height:1px;background:#aca899"></div>
<div style="left:745px;top:154px;width:278px;height:1px;background:#ffffff"></div>
<div class="t" style="right:207px;top:162px;">试样批号<span class="l">:</span></div>
<div style="left:818px;top:159px;width:200px;height:20px;background:#fff;border:1px solid;border-color:#aca899 #fff #fff #aca899;box-shadow:inset 1px 1px 0 #716f64, inset -1px -1px 0 #ece9d8"></div>
<div class="t" style="left:820px;top:162px;"><span class="l">/</span></div>
<div class="t" style="right:207px;top:182px;">试样编号<span class="l">:</span></div>
<div style="left:818px;top:179px;width:200px;height:20px;background:#fff;border:1px solid;border-color:#aca899 #fff #fff #aca899;box-shadow:inset 1px 1px 0 #716f64, inset -1px -1px 0 #ece9d8"></div>
<div class="t" style="left:820px;top:182px;"><span class="l">/</span></div>
<div class="t" style="right:207px;top:202px;">材质<span class="l">:</span></div>
<div style="left:818px;top:199px;width:200px;height:20px;background:#fff;border:1px solid;border-color:#aca899 #fff #fff #aca899;box-shadow:inset 1px 1px 0 #716f64, inset -1px -1px 0 #ece9d8"></div>
<div class="t" style="left:820px;top:202px;"><span class="l">/</span></div>
<div class="t" style="right:207px;top:223px;">规格<span class="l">:</span></div>
<div style="left:818px;top:220px;width:200px;height:20px;background:#fff;border:1px solid;border-color:#aca899 #fff #fff #aca899;box-shadow:inset 1px 1px 0 #716f64, inset -1px -1px 0 #ece9d8"></div>
<div class="t" style="left:820px;top:223px;"><span class="l">/</span></div>
<div class="t" style="right:207px;top:242px;">试验日期<span class="l">:</span></div>
<div style="left:818px;top:239px;width:200px;height:20px;background:#fff;border:1px solid;border-color:#aca899 #fff #fff #aca899;box-shadow:inset 1px 1px 0 #716f64, inset -1px -1px 0 #ece9d8"></div>
<div class="t" style="left:822px;top:243px;"><span class="d">2008</span><span class="l">-&nbsp;</span><span class="d">6</span><span class="l">-</span><span class="d">20</span></div>
<div class="btn" style="left:1000px;top:241px;width:16px;height:16px;"></div>
<svg style="left:1000px;top:241px" width="16" height="16" viewBox="0 0 16 16"><polygon points="4.5,6.5 11.5,6.5 8,10" fill="#000"/></svg>
<div class="t" style="right:207px;top:262px;">温度<span class="l">(</span>℃<span class="l">):</span></div>
<div style="left:818px;top:259px;width:200px;height:20px;background:#fff;border:1px solid;border-color:#aca899 #fff #fff #aca899;box-shadow:inset 1px 1px 0 #716f64, inset -1px -1px 0 #ece9d8"></div>
<div class="t" style="left:820px;top:262px;"><span class="d">20</span><span class="l">.</span><span class="d">0</span></div>
<div class="t" style="right:207px;top:282px;">试验人<span class="l">:</span></div>
<div style="left:818px;top:279px;width:200px;height:20px;background:#fff;border:1px solid;border-color:#aca899 #fff #fff #aca899;box-shadow:inset 1px 1px 0 #716f64, inset -1px -1px 0 #ece9d8"></div>
<div class="t" style="left:820px;top:282px;"><span class="l">/</span></div>
<div class="t" style="right:207px;top:302px;">试样形状<span class="l">:</span></div>
<div style="left:818px;top:299px;width:200px;height:20px;background:#fff;border:1px solid;border-color:#aca899 #fff #fff #aca899;box-shadow:inset 1px 1px 0 #716f64, inset -1px -1px 0 #ece9d8"></div>
<div class="t" style="left:822px;top:303px;">圆材</div>
<div class="btn" style="left:1000px;top:301px;width:16px;height:16px;"></div>
<svg style="left:1000px;top:301px" width="16" height="16" viewBox="0 0 16 16"><polygon points="4.5,6.5 11.5,6.5 8,10" fill="#000"/></svg>
<div class="t" style="left:753px;top:321px;">试样尺寸<span class="l">[</span>直径<span class="l">(mm)]:</span></div>
<div style="left:818px;top:334px;width:50px;height:20px;background:#fff;border:1px solid;border-color:#aca899 #fff #fff #aca899;box-shadow:inset 1px 1px 0 #716f64, inset -1px -1px 0 #ece9d8"></div>
<div class="t" style="left:820px;top:337px;"><span class="d">0</span><span class="l">.</span><span class="d">0</span></div>
<div class="t" style="right:207px;top:358px;"><span class="l">So(mm^</span><span class="d">2</span><span class="l">):</span></div>
<div style="left:818px;top:355px;width:200px;height:20px;background:#fff;border:1px solid;border-color:#aca899 #fff #fff #aca899;box-shadow:inset 1px 1px 0 #716f64, inset -1px -1px 0 #ece9d8"></div>
<div class="t" style="left:820px;top:358px;"><span class="d">0</span><span class="l">.</span><span class="d">0</span></div>
<div class="t" style="right:207px;top:378px;"><span class="l">Le(mm):</span></div>
<div style="left:818px;top:375px;width:50px;height:20px;background:#fff;border:1px solid;border-color:#aca899 #fff #fff #aca899;box-shadow:inset 1px 1px 0 #716f64, inset -1px -1px 0 #ece9d8"></div>
<div class="t" style="left:820px;top:378px;"><span class="d">50</span><span class="l">.</span><span class="d">0</span></div>
<div class="t" style="right:207px;top:398px;"><span class="l">Lu(mm):</span></div>
<div style="left:818px;top:395px;width:50px;height:20px;background:#fff;border:1px solid;border-color:#aca899 #fff #fff #aca899;box-shadow:inset 1px 1px 0 #716f64, inset -1px -1px 0 #ece9d8"></div>
<div class="t" style="left:820px;top:398px;"><span class="d">0</span></div>
<div class="t" style="right:207px;top:418px;"><span class="l">Su(mm^</span><span class="d">2</span><span class="l">):</span></div>
<div style="left:818px;top:415px;width:50px;height:20px;background:#fff;border:1px solid;border-color:#aca899 #fff #fff #aca899;box-shadow:inset 1px 1px 0 #716f64, inset -1px -1px 0 #ece9d8"></div>
<div class="t" style="left:820px;top:418px;"><span class="d">0</span></div>
<div class="t" style="right:207px;top:437px;"><span class="l">Fm(kN):</span></div>
<div style="left:818px;top:434px;width:50px;height:20px;background:#fff;border:1px solid;border-color:#aca899 #fff #fff #aca899;box-shadow:inset 1px 1px 0 #716f64, inset -1px -1px 0 #ece9d8"></div>
<div class="t" style="left:820px;top:437px;"><span class="d">0</span></div>
<div class="t" style="right:207px;top:457px;"><span class="l">FeH(kN):</span></div>
<div style="left:818px;top:454px;width:50px;height:20px;background:#fff;border:1px solid;border-color:#aca899 #fff #fff #aca899;box-shadow:inset 1px 1px 0 #716f64, inset -1px -1px 0 #ece9d8"></div>
<div class="t" style="left:820px;top:457px;"><span class="d">0</span></div>
<div class="t" style="right:207px;top:476px;"><span class="l">FeL(kN):</span></div>
<div style="left:818px;top:473px;width:50px;height:20px;background:#fff;border:1px solid;border-color:#aca899 #fff #fff #aca899;box-shadow:inset 1px 1px 0 #716f64, inset -1px -1px 0 #ece9d8"></div>
<div class="t" style="left:820px;top:476px;"><span class="d">0</span></div>
<div class="t" style="right:207px;top:495px;"><span class="l">Fp</span><span class="d">0</span><span class="l">.</span><span class="d">2</span><span class="l">(kN):</span></div>
<div style="left:818px;top:492px;width:50px;height:20px;background:#fff;border:1px solid;border-color:#aca899 #fff #fff #aca899;box-shadow:inset 1px 1px 0 #716f64, inset -1px -1px 0 #ece9d8"></div>
<div class="t" style="left:820px;top:495px;"><span class="d">0</span></div>
<div class="t" style="right:207px;top:515px;"><span class="l">Fp</span><span class="d">0</span><span class="l">.</span><span class="d">1</span><span class="l">(kN):</span></div>
<div style="left:818px;top:512px;width:50px;height:20px;background:#fff;border:1px solid;border-color:#aca899 #fff #fff #aca899;box-shadow:inset 1px 1px 0 #716f64, inset -1px -1px 0 #ece9d8"></div>
<div class="t" style="left:820px;top:515px;"><span class="d">0</span></div>
<div class="t" style="right:207px;top:535px;"><span class="l">Ft</span><span class="d">10</span><span class="l">.</span><span class="d">0</span><span class="l">(kN):</span></div>
<div style="left:818px;top:532px;width:50px;height:20px;background:#fff;border:1px solid;border-color:#aca899 #fff #fff #aca899;box-shadow:inset 1px 1px 0 #716f64, inset -1px -1px 0 #ece9d8"></div>
<div class="t" style="left:820px;top:535px;"><span class="d">0</span></div>
<div class="t" style="right:207px;top:554px;"><span class="l">E(GPa):</span></div>
<div style="left:818px;top:551px;width:50px;height:20px;background:#fff;border:1px solid;border-color:#aca899 #fff #fff #aca899;box-shadow:inset 1px 1px 0 #716f64, inset -1px -1px 0 #ece9d8"></div>
<div class="t" style="left:820px;top:554px;"><span class="d">0</span></div>
<div class="t" style="right:207px;top:574px;"><span class="l">Ag(%&nbsp;):</span></div>
<div style="left:818px;top:571px;width:50px;height:20px;background:#fff;border:1px solid;border-color:#aca899 #fff #fff #aca899;box-shadow:inset 1px 1px 0 #716f64, inset -1px -1px 0 #ece9d8"></div>
<div class="t" style="left:820px;top:574px;"><span class="d">0</span></div>
<div class="t" style="right:207px;top:595px;">屈强比<span class="l">:</span></div>
<div style="left:818px;top:592px;width:50px;height:20px;background:#fff;border:1px solid;border-color:#aca899 #fff #fff #aca899;box-shadow:inset 1px 1px 0 #716f64, inset -1px -1px 0 #ece9d8"></div>
<div class="t" style="left:820px;top:595px;"><span class="d">0</span></div>
<div class="t" style="right:59px;top:378px;"><span class="l">Lo(mm):</span></div>
<div style="left:968px;top:375px;width:50px;height:20px;background:#fff;border:1px solid;border-color:#aca899 #fff #fff #aca899;box-shadow:inset 1px 1px 0 #716f64, inset -1px -1px 0 #ece9d8"></div>
<div class="t" style="left:970px;top:378px;"><span class="d">50</span><span class="l">.</span><span class="d">0</span></div>
<div class="t" style="right:59px;top:398px;"><span class="l">A(%&nbsp;):</span></div>
<div style="left:968px;top:395px;width:50px;height:20px;background:#fff;border:1px solid;border-color:#aca899 #fff #fff #aca899;box-shadow:inset 1px 1px 0 #716f64, inset -1px -1px 0 #ece9d8"></div>
<div class="t" style="left:970px;top:398px;"><span class="d">0</span></div>
<div class="t" style="right:59px;top:418px;"><span class="l">Z(%&nbsp;):</span></div>
<div style="left:968px;top:415px;width:50px;height:20px;background:#fff;border:1px solid;border-color:#aca899 #fff #fff #aca899;box-shadow:inset 1px 1px 0 #716f64, inset -1px -1px 0 #ece9d8"></div>
<div class="t" style="left:970px;top:418px;"><span class="d">0</span></div>
<div class="t" style="right:59px;top:437px;"><span class="l">Rm(MPa):</span></div>
<div style="left:968px;top:434px;width:50px;height:20px;background:#fff;border:1px solid;border-color:#aca899 #fff #fff #aca899;box-shadow:inset 1px 1px 0 #716f64, inset -1px -1px 0 #ece9d8"></div>
<div class="t" style="left:970px;top:437px;"><span class="d">0</span></div>
<div class="t" style="right:59px;top:457px;"><span class="l">ReH(MPa):</span></div>
<div style="left:968px;top:454px;width:50px;height:20px;background:#fff;border:1px solid;border-color:#aca899 #fff #fff #aca899;box-shadow:inset 1px 1px 0 #716f64, inset -1px -1px 0 #ece9d8"></div>
<div class="t" style="left:970px;top:457px;"><span class="d">0</span></div>
<div class="t" style="right:59px;top:476px;"><span class="l">ReL(MPa):</span></div>
<div style="left:968px;top:473px;width:50px;height:20px;background:#fff;border:1px solid;border-color:#aca899 #fff #fff #aca899;box-shadow:inset 1px 1px 0 #716f64, inset -1px -1px 0 #ece9d8"></div>
<div class="t" style="left:970px;top:476px;"><span class="d">0</span></div>
<div class="t" style="right:59px;top:495px;"><span class="l">Rp</span><span class="d">0</span><span class="l">.</span><span class="d">2</span><span class="l">(MPa):</span></div>
<div style="left:968px;top:492px;width:50px;height:20px;background:#fff;border:1px solid;border-color:#aca899 #fff #fff #aca899;box-shadow:inset 1px 1px 0 #716f64, inset -1px -1px 0 #ece9d8"></div>
<div class="t" style="left:970px;top:495px;"><span class="d">0</span></div>
<div class="t" style="right:59px;top:515px;"><span class="l">Rp</span><span class="d">0</span><span class="l">.</span><span class="d">1</span><span class="l">(MPa):</span></div>
<div style="left:968px;top:512px;width:50px;height:20px;background:#fff;border:1px solid;border-color:#aca899 #fff #fff #aca899;box-shadow:inset 1px 1px 0 #716f64, inset -1px -1px 0 #ece9d8"></div>
<div class="t" style="left:970px;top:515px;"><span class="d">0</span></div>
<div class="t" style="right:59px;top:535px;"><span class="l">Rt</span><span class="d">10</span><span class="l">.</span><span class="d">0</span><span class="l">(MPa):</span></div>
<div style="left:968px;top:532px;width:50px;height:20px;background:#fff;border:1px solid;border-color:#aca899 #fff #fff #aca899;box-shadow:inset 1px 1px 0 #716f64, inset -1px -1px 0 #ece9d8"></div>
<div class="t" style="left:970px;top:535px;"><span class="d">0</span></div>
<div class="t" style="right:59px;top:554px;"><span class="l">Ae(%&nbsp;):</span></div>
<div style="left:968px;top:551px;width:50px;height:20px;background:#fff;border:1px solid;border-color:#aca899 #fff #fff #aca899;box-shadow:inset 1px 1px 0 #716f64, inset -1px -1px 0 #ece9d8"></div>
<div class="t" style="left:970px;top:554px;"><span class="d">0</span></div>
<div class="t" style="right:59px;top:574px;"><span class="l">Agt(%&nbsp;):</span></div>
<div style="left:968px;top:571px;width:50px;height:20px;background:#fff;border:1px solid;border-color:#aca899 #fff #fff #aca899;box-shadow:inset 1px 1px 0 #716f64, inset -1px -1px 0 #ece9d8"></div>
<div class="t" style="left:970px;top:574px;"><span class="d">0</span></div>
<svg style="left:868px;top:416px" width="18" height="17" viewBox="0 0 18 17"><path d="M1.5 4.5 V15.5 H10.5 V4.5" fill="#fff" stroke="#000" stroke-width="1.2"/><path d="M2.5 6.5H9.5M2.5 8.5H9.5M2.5 10.5H9.5M2.5 12.5H9.5M2.5 14.2H9.5" stroke="#20f0f0" stroke-width="1"/><path d="M1.5 1.2v3.4M3.5 1.2v3.4M5.5 1.2v3.4M7.5 1.2v3.4M9.5 1.2v3.4" stroke="#000" stroke-width="1"/><path d="M3.5 11.5 L12.8 2.2" stroke="#000" stroke-width="2.4"/><path d="M4.2 10.8 L12.3 2.7" stroke="#f8f000" stroke-width="1.2"/><rect x="12" y="1.3" width="1.5" height="1.5" fill="#e01010"/><path d="M7 8.5 q2.5 -2.5 6 -1.5 l2 1 v6 l-2 0.8 q-2.5 1 -5 -0.5 l1 -1.3 l-3 -0.5 l0.5 -1.8 l-1.5 -0.4z" fill="#f8f040" stroke="#000" stroke-width="0.9"/><rect x="15.3" y="7.5" width="1.6" height="7" fill="#20f0f0" stroke="#000" stroke-width="0.5"/></svg>
<div style="left:745px;top:616px;width:278px;height:1px;background:#aca899"></div>
<div style="left:742px;top:618px;width:282px;height:1px;background:#aca899"></div>
<div style="left:742px;top:619px;width:282px;height:1px;background:#716f64"></div>
<div style="left:743px;top:624px;width:281px;height:1px;background:#aca899"></div>
<div style="left:743px;top:625px;width:281px;height:1px;background:#716f64"></div>
<div style="left:743px;top:620px;width:1px;height:116px;background:#ffffff"></div>
<div style="left:1022px;top:624px;width:1px;height:112px;background:#aca899"></div>
<div style="left:1023px;top:624px;width:1px;height:113px;background:#716f64"></div>
<div style="left:756px;top:654px;width:45px;height:45px;background:#d4d0c8"></div>
<svg style="left:756px;top:654px" width="45" height="45" viewBox="0 0 45 45"><polygon points="21.5,5.6 31.2,15.3 27.5,15.3 27.5,19.3 15.5,19.3 15.5,15.3 11.8,15.3" fill="#808080" stroke="#1c1c1c" stroke-width="1.2"/><rect x="11" y="21.1" width="21" height="1.8" fill="#404040"/><polygon points="21.5,38.2 31.2,28.5 27.5,28.5 27.5,24.5 15.5,24.5 15.5,28.5 11.8,28.5" fill="#808080" stroke="#1c1c1c" stroke-width="1.2"/></svg>
<div style="left:816px;top:645px;width:157px;height:68px;border:1px solid;border-color:#aca899 #fff #fff #aca899"></div>
<div style="left:817px;top:646px;width:155px;height:66px;border:1px solid;border-color:#fff #aca899 #aca899 #fff"></div>
<div style="left:828px;top:648px;width:60px;height:60px;background:#b9b9b9"></div>
<div style="left:828px;top:648px;width:60px;height:60px;background:#c0c0c0;border:1px solid #f8f8f8;border-radius:7px"></div>
<svg style="left:828px;top:648px" width="60" height="60" viewBox="0 0 60 60"><polygon points="20.4,9.2 20.4,33 43.8,21.2" fill="#808080"/><path d="M20.4 33.4 V9.2 L43.8 21.2" fill="none" stroke="#202020" stroke-width="1.1"/><path d="M20.4 33.4 L43.8 21.2" stroke="#f8f8f8" stroke-width="1.1"/></svg>
<div class="t" style="left:839px;top:688px;">开始</div>
<div class="t" style="left:864.5px;top:688px;font-weight:bold"><span class="l">F</span><span class="d">5</span></div>
<div style="left:900px;top:648px;width:60px;height:60px;background:#b9b9b9"></div>
<div style="left:900px;top:648px;width:60px;height:60px;background:#ffff00;border-radius:7px"></div>
<svg style="left:900px;top:648px" width="60" height="60" viewBox="0 0 60 60"><polygon points="24.5,11.5 36.5,11.5 44,19 44,31 36.5,38 24.5,38 17,31 17,19" fill="#ff0000" stroke="#302020" stroke-width="1"/></svg>
<div class="t" style="left:914px;top:689px;">停止</div>
<div class="t" style="left:938px;top:689px;font-weight:bold"><span class="l">F</span><span class="d">6</span></div>
</body></html>
